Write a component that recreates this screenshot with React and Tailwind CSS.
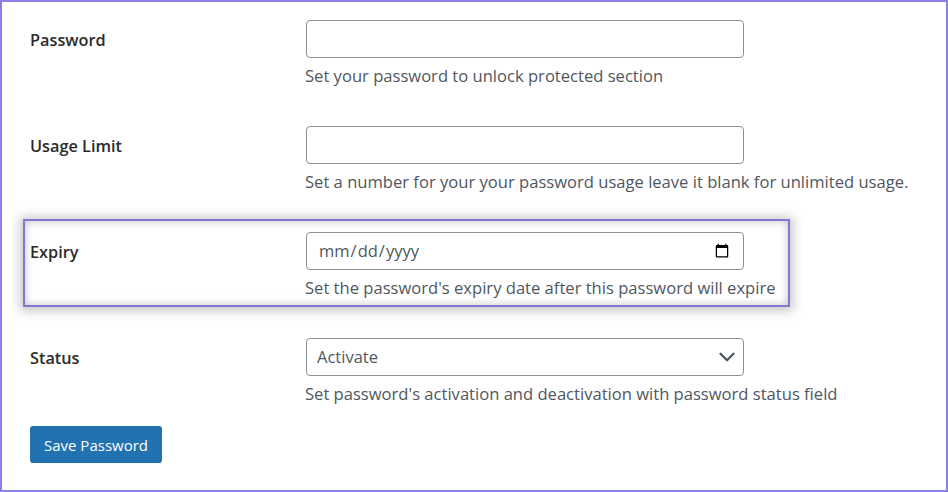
import { ChevronDown } from 'lucide-react'

function Row({ label, hint, children }) {
    return (
        <div className="flex h-[106px] shrink-0">
            <div className="w-[276px] shrink-0 pt-[8px] text-[16.3px] leading-[24px] font-[550] text-[#2b2b2b]">{label}</div>
            <div className="flex flex-col">
                {children}
                <p className="mt-[6px] ml-[-1px] text-[16.58px] leading-[24px] text-[#50575e] whitespace-nowrap">{hint}</p>
            </div>
        </div>
    )
}

const boxClass = "w-[438px] h-[38px] rounded-[4px] border border-[#8c8f94] bg-white px-[11px] text-[16.5px] text-[#50575e] outline-none"

export default function App() {
    return (
        <div className="w-[948px] h-[492px] bg-white border-2 border-[#8b80e8] overflow-hidden pt-[18px] pl-[28px] font-['Open_Sans','Noto_Sans',sans-serif]">
            {/* password */}
            <Row label="Password" hint="Set your password to unlock protected section">
                <input type="text" className={boxClass} />
            </Row>
            {/* usage limit */}
            <Row label="Usage Limit" hint="Set a number for your your password usage leave it blank for unlimited usage.">
                <input type="text" className={boxClass} />
            </Row>
            {/* expiry */}
            <div className="relative">
                <Row label="Expiry" hint="Set the password's expiry date after this password will expire">
                    <input type="date" className={boxClass} />
                </Row>
                <div className="absolute left-[-7px] top-[-13px] w-[767px] h-[88px] border-2 border-[#8377d6] shadow-[0_1px_10px_3px_rgba(80,80,80,0.32),inset_0_0_8px_rgba(80,80,80,0.35)] pointer-events-none"></div>
            </div>
            {/* status */}
            <div className="h-[88px]">
                <Row label="Status" hint="Set password's activation and deactivation with password status field">
                    <div className="relative w-[438px]">
                        <select className={`${boxClass} appearance-none pl-[10px]`} defaultValue="Activate">
                            <option>Activate</option>
                        </select>
                        <ChevronDown className="absolute right-[4px] top-[6px] text-[#50575e]" size={26} strokeWidth={2.2} />
                    </div>
                </Row>
            </div>
            <button className="w-[132px] h-[37px] pt-[1px] rounded-[3px] bg-[#2271b1] text-[15px] font-medium text-white">Save Password</button>
        </div>
    )
}
